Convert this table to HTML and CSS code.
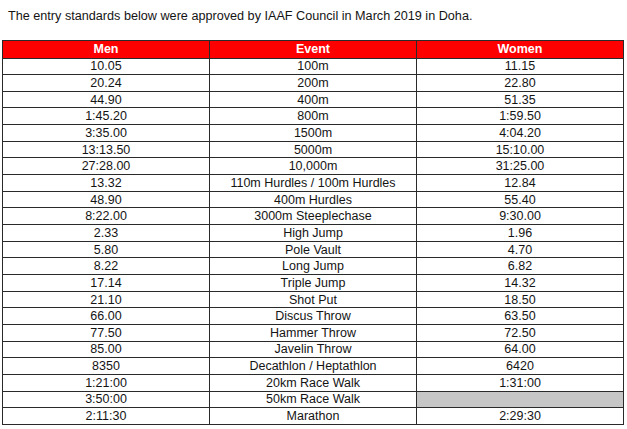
FILE: index.html
```html
<!DOCTYPE html>
<html>
<head>
<meta charset="utf-8">
<link rel="stylesheet" href="styles.css">
</head>
<body>
<p class="intro">The entry standards below were approved by IAAF Council in March 2019 in Doha.</p>
<table class="standards">
<thead>
<tr><th>Men</th><th>Event</th><th>Women</th></tr>
</thead>
<tbody>
<tr><td>10.05</td><td>100m</td><td>11.15</td></tr>
<tr><td>20.24</td><td>200m</td><td>22.80</td></tr>
<tr><td>44.90</td><td>400m</td><td>51.35</td></tr>
<tr><td>1:45.20</td><td>800m</td><td>1:59.50</td></tr>
<tr><td>3:35.00</td><td>1500m</td><td>4:04.20</td></tr>
<tr><td>13:13.50</td><td>5000m</td><td>15:10.00</td></tr>
<tr><td>27:28.00</td><td>10,000m</td><td>31:25.00</td></tr>
<tr><td>13.32</td><td>110m Hurdles / 100m Hurdles</td><td>12.84</td></tr>
<tr><td>48.90</td><td>400m Hurdles</td><td>55.40</td></tr>
<tr><td>8:22.00</td><td>3000m Steeplechase</td><td>9:30.00</td></tr>
<tr><td>2.33</td><td>High Jump</td><td>1.96</td></tr>
<tr><td>5.80</td><td>Pole Vault</td><td>4.70</td></tr>
<tr><td>8.22</td><td>Long Jump</td><td>6.82</td></tr>
<tr><td>17.14</td><td>Triple Jump</td><td>14.32</td></tr>
<tr><td>21.10</td><td>Shot Put</td><td>18.50</td></tr>
<tr><td>66.00</td><td>Discus Throw</td><td>63.50</td></tr>
<tr><td>77.50</td><td>Hammer Throw</td><td>72.50</td></tr>
<tr><td>85.00</td><td>Javelin Throw</td><td>64.00</td></tr>
<tr><td>8350</td><td>Decathlon / Heptathlon</td><td>6420</td></tr>
<tr><td>1:21:00</td><td>20km Race Walk</td><td>1:31:00</td></tr>
<tr><td>3:50:00</td><td>50km Race Walk</td><td class="na"></td></tr>
<tr><td>2:11:30</td><td>Marathon</td><td>2:29:30</td></tr>
</tbody>
</table>
</body>
</html>
```

FILE: styles.css
```css
html, body {
  margin: 0;
  padding: 0;
  background: #ffffff;
}
body {
  font-family: "Liberation Sans", Arial, sans-serif;
  color: #141414;
  padding: 8px 0 0 2px;
}
.intro {
  margin: 0 0 0 6px;
  font-size: 12.65px;
  line-height: 16px;
}
.standards {
  margin-top: 16px;
  width: 622px;
  border-collapse: collapse;
  table-layout: fixed;
  font-size: 12.5px;
}
.standards th,
.standards td {
  border: 1px solid #2a2a2a;
  padding: 0;
  text-align: center;
  line-height: 14px;
  width: 33.33%;
}
.standards th {
  background: #ff0000;
  color: #ffffff;
  font-weight: bold;
  height: 16.5px;
}
.standards td {
  height: 15.67px;
}
.standards td.na {
  background: #c6c6c6;
}
```
